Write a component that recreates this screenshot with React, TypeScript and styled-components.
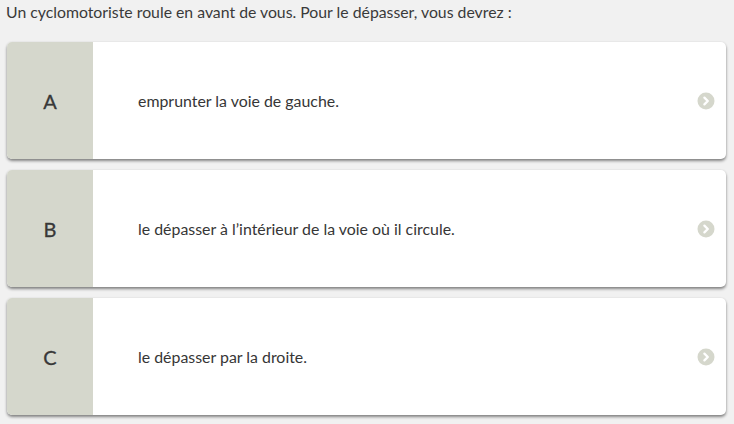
import * as React from 'react'
import styled, { createGlobalStyle } from 'styled-components'

const GlobalStyle = createGlobalStyle`
  html, body {
    margin: 0;
    padding: 0;
    background: #f1f1f1;
  }
  body {
    font-family: Lato, "Open Sans", "Liberation Sans", sans-serif;
    color: #444;
  }
`

const Page = styled.div`
  width: 734px;
  height: 424px;
  box-sizing: border-box;
  padding: 2px 8px 0 7px;
`

const Question = styled.div`
  font-size: 15.8px;
  line-height: 20px;
  color: #3a3a3a;
  margin-left: -1px;
  margin-bottom: 20px;
`

const List = styled.div`
  display: flex;
  flex-direction: column;
  gap: 11px;
`

const Card = styled.div`
  display: flex;
  height: 117px;
  background: #fff;
  border-radius: 5px;
  overflow: hidden;
  box-shadow: 0 2px 3px rgba(0, 0, 0, 0.45), 0 0 2px rgba(0, 0, 0, 0.08);
  cursor: pointer;
`

const Letter = styled.div`
  width: 86px;
  flex: none;
  background: #d5d7cc;
  display: flex;
  align-items: center;
  justify-content: center;
  font-size: 20px;
  color: #383838;
  -webkit-text-stroke: 0.3px #383838;
`

const Answer = styled.div`
  flex: 1;
  display: flex;
  align-items: center;
  padding-left: 45px;
  font-size: 15.9px;
  color: #363636;
`

const Arrow = styled.div`
  width: 40px;
  flex: none;
  display: flex;
  align-items: center;
  padding-left: 11px;
  box-sizing: border-box;
`

const Chevron = () => (
  <svg width="18" height="18" viewBox="0 0 18 18">
    <circle cx="9" cy="9" r="8.5" fill="#d5d7cc" />
    <path d="M7.4 5.6 L10.8 9 L7.4 12.4" fill="none" stroke="#fff" strokeWidth="2.3" strokeLinecap="round" strokeLinejoin="round" />
  </svg>
)

const answers = [
  { letter: 'A', text: 'emprunter la voie de gauche.' },
  { letter: 'B', text: 'le dépasser à l’intérieur de la voie où il circule.' },
  { letter: 'C', text: 'le dépasser par la droite.' },
]

export default function App() {
  return (
    <>
      <GlobalStyle />
      <Page>
        <Question>Un cyclomotoriste roule en avant de vous. Pour le dépasser, vous devrez :</Question>
        <List>
          {answers.map((a) => (
            <Card key={a.letter}>
              <Letter>{a.letter}</Letter>
              <Answer>{a.text}</Answer>
              <Arrow>
                <Chevron />
              </Arrow>
            </Card>
          ))}
        </List>
      </Page>
    </>
  )
}
